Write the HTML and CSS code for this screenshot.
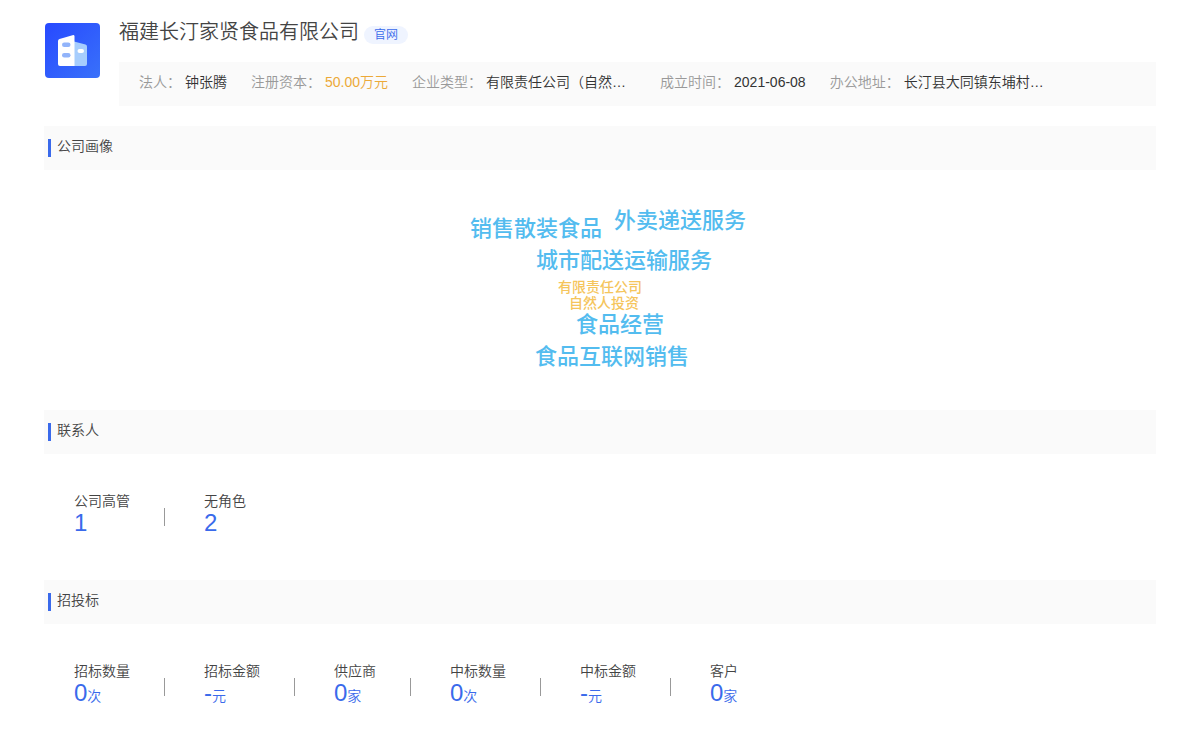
FILE: index.html
```html
<!DOCTYPE html>
<html lang="zh-CN">
<head>
<meta charset="utf-8">
<title>福建长汀家贤食品有限公司</title>
<link rel="stylesheet" href="styles.css">
</head>
<body>
<main class="page">
  <header class="company">
    <svg class="logo" viewBox="0 0 55 55" aria-hidden="true">
      <defs>
        <linearGradient id="bg" x1="0" y1="0" x2="1" y2="1">
          <stop offset="0" stop-color="#2749ff"/>
          <stop offset="1" stop-color="#3971fa"/>
        </linearGradient>
      </defs>
      <rect width="55" height="55" rx="4" fill="url(#bg)"/>
      <path d="M29 18.500L40.500 21.500Q42 22 42 23.500V41Q42 43 40 43H29Z" fill="#a6cdfd"/>
      <path d="M14.500 16L27.500 12.200Q29.500 11.700 29.500 13.500V43H15Q13 43 13 41V18Q13 16.500 14.500 16Z" fill="#fff"/>
      <rect x="17" y="19.500" width="8.500" height="4.500" rx="2.200" fill="#92b4fa"/>
      <rect x="17" y="30" width="8.500" height="4.500" rx="2.200" fill="#92b4fa"/>
      <rect x="32.500" y="26" width="6.500" height="4" rx="2" fill="#fff"/>
    </svg>
    <div class="company-body">
      <div class="title-row">
        <h1 class="company-name">福建长汀家贤食品有限公司</h1>
        <a class="site-link" href="#">官网</a>
      </div>
      <dl class="facts">
        <div class="fact"><dt>法人：</dt><dd>钟张腾</dd></div>
        <div class="fact"><dt>注册资本：</dt><dd class="money">50.00万元</dd></div>
        <div class="fact"><dt>企业类型：</dt><dd class="wide">有限责任公司（自然…</dd></div>
        <div class="fact"><dt>成立时间：</dt><dd>2021-06-08</dd></div>
        <div class="fact"><dt>办公地址：</dt><dd class="wide">长汀县大同镇东埔村…</dd></div>
      </dl>
    </div>
  </header>

  <section>
    <h2 class="section-title">公司画像</h2>
    <div class="cloud">
      <div class="cloud-row cloud-top"><span>销售散装食品</span><span class="raised">外卖递送服务</span></div>
      <div class="cloud-row cloud-delivery">城市配送运输服务</div>
      <div class="cloud-row minor">有限责任公司</div>
      <div class="cloud-row minor cloud-investor">自然人投资</div>
      <div class="cloud-row cloud-food">食品经营</div>
      <div class="cloud-row cloud-online">食品互联网销售</div>
    </div>
  </section>

  <section>
    <h2 class="section-title">联系人</h2>
    <dl class="stats">
      <div class="stat"><dt>公司高管</dt><dd>1</dd></div>
      <div class="stat"><dt>无角色</dt><dd>2</dd></div>
    </dl>
  </section>

  <section>
    <h2 class="section-title">招投标</h2>
    <dl class="stats">
      <div class="stat"><dt>招标数量</dt><dd>0<small>次</small></dd></div>
      <div class="stat"><dt>招标金额</dt><dd>-<small>元</small></dd></div>
      <div class="stat"><dt>供应商</dt><dd>0<small>家</small></dd></div>
      <div class="stat"><dt>中标数量</dt><dd>0<small>次</small></dd></div>
      <div class="stat"><dt>中标金额</dt><dd>-<small>元</small></dd></div>
      <div class="stat"><dt>客户</dt><dd>0<small>家</small></dd></div>
    </dl>
  </section>
</main>
</body>
</html>
```

FILE: styles.css
```css
* {
  box-sizing: border-box;
}

body {
  margin: 0;
  background: #fff;
  color: #444;
  font: 350 14px/20px "Liberation Sans", "Noto Sans CJK SC", sans-serif;
}

h1, h2, dl, dd {
  margin: 0;
  font-weight: 350;
}

.page {
  padding: 16px 44px 0;
}

.company {
  display: flex;
  gap: 19px;
  margin-bottom: 20px;
}

.logo {
  flex: none;
  width: 55px;
  height: 55px;
  margin: 7px 0 0 1px;
}

.company-body {
  flex: 1;
  min-width: 0;
}

.title-row {
  display: flex;
  align-items: flex-start;
  gap: 5px;
  height: 46px;
}

.company-name {
  font-size: 20px;
  line-height: 32px;
}

.site-link {
  margin-top: 10px;
  padding: 0 10px;
  border-radius: 9px;
  background: #eff4ff;
  color: #3a6aeb;
  font-size: 12px;
  line-height: 18px;
  text-decoration: none;
}

.facts {
  display: flex;
  gap: 24px;
  height: 44px;
  padding: 10px 20px;
  background: #fafafa;
  white-space: nowrap;
}

.fact {
  display: flex;
  gap: 4px;
}

.fact dt {
  color: #999;
}

.fact dd {
  color: #333;
}

.fact .money {
  color: #eca938;
}

.fact .wide {
  width: 150px;
}

.section-title {
  display: flex;
  align-items: flex-start;
  gap: 6px;
  height: 44px;
  padding: 10px 4px;
  background: #fafafa;
  font-size: 14px;
}

.section-title::before {
  content: "";
  width: 3px;
  height: 18px;
  margin-top: 3px;
  background: #3a6aeb;
}

.cloud {
  display: flex;
  flex-direction: column;
  align-items: center;
  height: 240px;
  padding-top: 35px;
  color: #53bcef;
  font-size: 22px;
  font-weight: 500;
  line-height: 32px;
}

.cloud-row {
  display: flex;
}

.cloud-top {
  gap: 12px;
  height: 40px;
  padding-left: 16px;
  align-items: flex-end;
}

.raised {
  align-self: flex-start;
}

.cloud-delivery {
  padding-left: 48px;
}

.minor {
  height: 16px;
  color: #f5c55c;
  font-size: 14px;
  line-height: 20px;
}

.cloud-investor {
  padding-left: 8px;
}

.cloud-food {
  padding-left: 40px;
}

.cloud-online {
  padding-left: 24px;
}

.stats {
  display: flex;
  height: 126px;
  padding: 36px 30px 0;
}

.stat {
  display: flex;
  flex-direction: column;
}

.stat + .stat {
  margin-left: 34px;
  padding-left: 39px;
  border-left: 1px solid #999;
  border-image: linear-gradient(transparent 19px, #999 19px, #999 36px, transparent 36px) 1;
}

.stat dt {
  line-height: 22px;
}

.stat dd {
  color: #3a6aeb;
  font-size: 24px;
  line-height: 22px;
}

.stat small {
  font-size: 14px;
}
```
